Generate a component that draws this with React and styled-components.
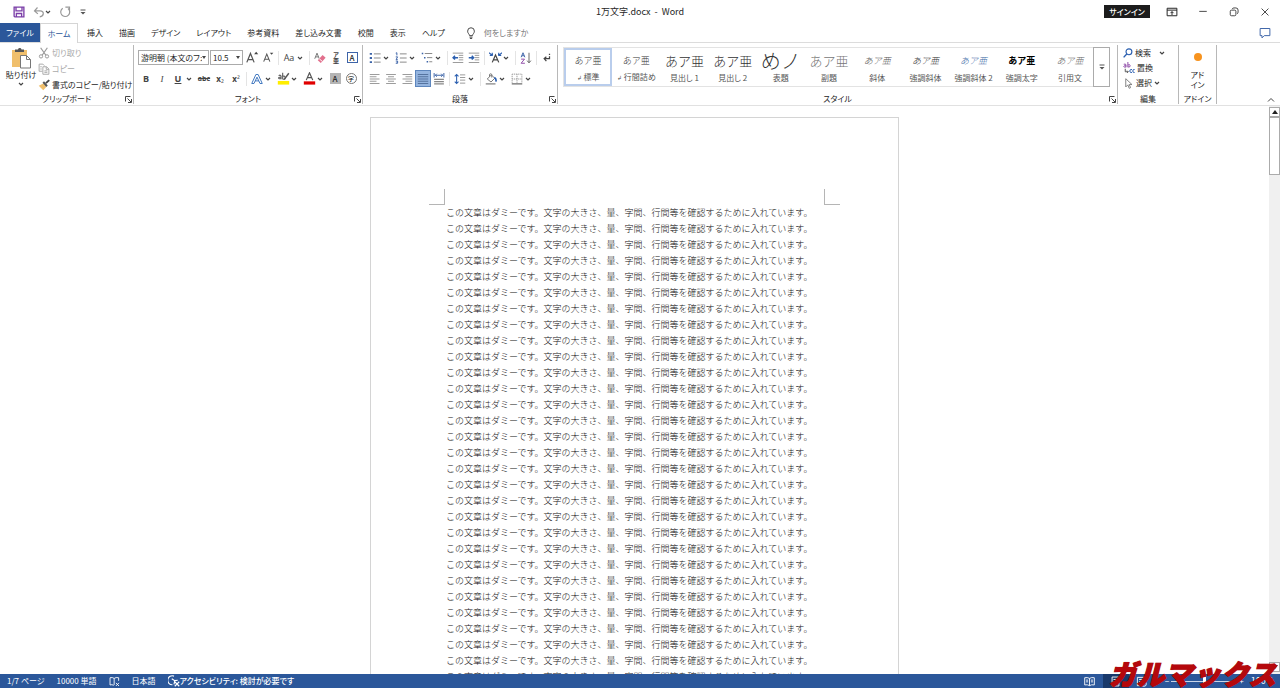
import React from 'react'
import styled, { createGlobalStyle, css } from 'styled-components'

const LINE = 'この文章はダミーです。文字の大きさ、量、字間、行間等を確認するために入れています。'
const LINE_COUNT = 30

const TABS = ['挿入', '描画', 'デザイン', 'レイアウト', '参考資料', '差し込み文書', '校閲', '表示', 'ヘルプ']

const STYLES = [
  { name: '標準', mark: true, selected: true },
  { name: '行間詰め', mark: true },
  { name: '見出し 1', size: 13 },
  { name: '見出し 2', size: 13 },
  { name: '表題', size: 20, sample: 'めノ' },
  { name: '副題', size: 13, color: '#777' },
  { name: '斜体', italic: true, color: '#555' },
  { name: '強調斜体', italic: true },
  { name: '強調斜体 2', italic: true, color: '#3f6da8' },
  { name: '強調太字', bold: true, color: '#000' },
  { name: '引用文', italic: true, color: '#666' },
]

/* ---------- icons ---------- */

const Icon = ({ size = 12, children }) => (
  <svg width={size} height={size} viewBox="0 0 16 16" fill="none" stroke="#555" strokeWidth="1.3" aria-hidden="true">
    {children}
  </svg>
)

const Chevron = () => (
  <svg width="6" height="6" viewBox="0 0 6 6" fill="none" stroke="#444" strokeWidth="1.2" aria-hidden="true">
    <path d="M1 2l2 2 2-2" />
  </svg>
)

const Triangle = () => (
  <svg width="4" height="3" viewBox="0 0 4 3" aria-hidden="true">
    <path d="M0 0h4L2 3z" fill="#444" />
  </svg>
)

const SaveIcon = () => (
  <Icon>
    <path d="M1.5 1.5h13v13h-12l-1-1zM4 1.5v5h8v-5M4.5 14.5V10h7v4.5" stroke="#7b3fa8" strokeWidth="1.8" />
  </Icon>
)

const UndoIcon = () => (
  <Icon>
    <path d="M6 2L2 6.5l4.5 4M2.5 6.5h7c6 0 5.500 7-.5 8" stroke="#999" strokeWidth="1.6" />
  </Icon>
)

const RedoIcon = () => (
  <Icon>
    <path d="M5 3a6 6 0 1 0 7 .3M8.500 1.5H14v5" stroke="#999" strokeWidth="1.6" />
  </Icon>
)

const CustomizeIcon = () => (
  <Icon size={8}>
    <path d="M3 4h10" strokeWidth="2" />
    <path d="M3 8h10l-5 5z" fill="#555" stroke="none" />
  </Icon>
)

const RibbonModeIcon = () => (
  <Icon>
    <path d="M1.5 3h13v10h-13zM1.5 5.5h13M8 12V7.5M6 9.5l2-2 2 2" stroke="#222" />
  </Icon>
)

const MinimizeIcon = () => (
  <Icon size={10}>
    <path d="M2 7h12" stroke="#222" />
  </Icon>
)

const RestoreIcon = () => (
  <Icon size={10}>
    <rect x="2" y="5" width="9" height="9" rx="2" stroke="#222" />
    <path d="M5 3q1-1.500 3-1.500h3q3.500 0 3.500 3.500v3q0 2-1.500 3" stroke="#222" />
  </Icon>
)

const CloseIcon = () => (
  <Icon size={10}>
    <path d="M2.5 2.5l11 11M13.5 2.5l-11 11" stroke="#222" />
  </Icon>
)

const CommentIcon = () => (
  <Icon>
    <path d="M1.5 2h13v9.5H7l-3 3v-3H1.5z" stroke="#3d64a8" />
  </Icon>
)

const BulbIcon = () => (
  <Icon>
    <path d="M6 11.5c0-2-2.5-3-2.5-6a4.5 4.5 0 0 1 9 0c0 3-2.5 4-2.5 6zM6 13.500h4M6.500 15.300h3" stroke="#444" />
  </Icon>
)

const PasteIcon = () => (
  <svg width="20" height="22" viewBox="0 0 20 22" fill="none" aria-hidden="true">
    <path d="M1 3h15v17H1z" fill="#f0bf6c" />
    <path d="M4 5V2.5h3a1.8 1.8 0 0 1 3.5 0H13V5z" fill="#555" />
    <path d="M9.5 8.500h6l4 4V21h-10z" fill="#fff" stroke="#777" />
    <path d="M15.500 8.500v4h4" stroke="#777" />
  </svg>
)

const CutIcon = () => (
  <Icon>
    <path d="M3.5 1l7 10M12.5 1l-7 10" stroke="#999" strokeWidth="1.6" />
    <circle cx="4" cy="12.5" r="2.2" stroke="#999" />
    <circle cx="12" cy="12.5" r="2.2" stroke="#999" />
  </Icon>
)

const CopyIcon = () => (
  <Icon>
    <path d="M6 11H1.5V1.5h5l2 2M6.500 5h5l3 3v7h-8zM11 5v3.500h3.500M3 5h2M3 8h2M8.500 10.500h4M8.500 12.500h4" stroke="#aaa" />
  </Icon>
)

const PainterIcon = () => (
  <Icon>
    <path d="M1 9l6-3 4 4.5L7 15z" fill="#f0bf6c" stroke="none" />
    <path d="M6 5l5 5.500 2-2L8 3z" fill="#555" stroke="none" />
    <path d="M10.500 5.500L15 1.500" stroke="#444" strokeWidth="2.6" />
  </Icon>
)

const EraserIcon = () => (
  <Icon>
    <path d="M1 9L4 1.500 7 9M2 6.500h4" stroke="#777" />
    <path d="M5 11l6.500-7 4 3.500L9 14.500z" fill="#e2708d" stroke="none" />
    <path d="M7 9l4 3.500" stroke="#fff" />
  </Icon>
)

const ListIcon = ({ kind }) => (
  <Icon>
    {kind === 'number' ? (
      <path d="M1 1.5l1.5-.5v3.500M1 6.500h2.500L1.500 10h2M1 12h2.500v3H1M2 13.500h1" stroke="#3d64a8" />
    ) : kind === 'level' ? (
      <path d="M1 2h2M4 7.500h2M7.500 13h2" stroke="#3d64a8" strokeWidth="2" />
    ) : (
      <path d="M1 2.500h3M1 8h3M1 13.500h3" stroke="#3d64a8" strokeWidth="2.6" />
    )}
    {kind === 'level' ? (
      <path d="M5 2h10M8 7.500h7M11 13h4" stroke="#888" />
    ) : (
      <path d="M6.500 2.500h9M6.500 8h9M6.500 13.500h9" stroke="#888" />
    )}
  </Icon>
)

const IndentIcon = ({ out }) => (
  <Icon>
    <path d="M1 1.500h14M9 4.500h6M9 7.500h6M9 10.500h6M1 14h14" stroke="#999" />
    <path d={out ? 'M8 7.500H1.500M4 5L1.500 7.500 4 10' : 'M1 7.500h6.500M5 5l2.500 2.500L5 10'} stroke="#2b5fb0" strokeWidth="2" />
  </Icon>
)

const TextWidthIcon = () => (
  <Icon size={13}>
    <path d="M4 14L8 5l4 9M5.500 11h5" stroke="#444" strokeWidth="1.5" />
    <path d="M0 2l4 3.500M4 2v3.500H1M16 2l-4 3.500M12 2v3.500h3" stroke="#2b5fb0" strokeWidth="1.4" />
  </Icon>
)

const SortIcon = () => (
  <Icon>
    <path d="M1.500 7L4 1l2.500 6M2.500 5h3" stroke="#3d64a8" />
    <path d="M1.500 9.500H6L1.500 15h5" stroke="#8e4aa8" />
    <path d="M12 1v13M9.500 11.500l2.500 3 2.500-3" stroke="#666" />
  </Icon>
)

const MarkIcon = () => (
  <Icon size={10}>
    <path d="M12 1v2M12 5v4H4M7 6L3.500 9 7 13" stroke="#444" strokeWidth="2" />
  </Icon>
)

const ALIGN = {
  left: 'M1 2h13M1 5h9M1 8h13M1 11h9M1 14h13',
  center: 'M1.5 2h13M4 5h8M1.5 8h13M4 11h8M1.5 14h13',
  right: 'M2 2h13M6 5h9M2 8h13M6 11h9M2 14h13',
  justify: 'M1 2h14M1 5h14M1 8h14M1 11h14M1 14h14',
}

const AlignIcon = ({ kind }) => (
  <Icon>
    <path d={ALIGN[kind]} stroke={kind === 'justify' ? '#55739f' : '#999'} strokeWidth={kind === 'justify' ? 1.6 : 1.3} />
  </Icon>
)

const DistributeIcon = () => (
  <Icon>
    <path d="M1.5 0v6M14.500 0v6M3 3h10M5 1L3 3l2 2M11 1l2 2-2 2" stroke="#3d64a8" />
    <path d="M1.5 8.500h13M1.500 11.500h13M1.500 14.500h13" stroke="#888" strokeWidth="1.8" />
  </Icon>
)

const SpacingIcon = () => (
  <Icon>
    <path d="M3.500 2v12M1 4.500L3.500 2 6 4.500M1 11.500L3.500 14 6 11.500" stroke="#2b5fb0" strokeWidth="1.4" />
    <path d="M8 2.500h7M8 6h7M8 9.500h7M8 13.500h7" stroke="#999" />
  </Icon>
)

const BucketIcon = () => (
  <Icon>
    <path d="M3 8l5.500-5.500L13 7l-5 5zM6 5V2.500a1.500 1.500 0 0 1 3 0V6" stroke="#777" />
    <path d="M12.500 6q3 2 2 5.500" stroke="#2b5fb0" strokeWidth="2.2" />
    <path d="M1 14.500h13" stroke="#999" strokeWidth="2" />
  </Icon>
)

const BorderIcon = () => (
  <Icon>
    <path d="M1.500 1.500h13v12M1.500 1.500v12M8 1.500v12M1.500 8h13" stroke="#999" strokeDasharray="1.5 1" />
    <path d="M1 14.500h14" stroke="#666" strokeWidth="1.6" />
  </Icon>
)

const HighlightIcon = () => (
  <Icon size={13}>
    <path d="M1 11h14v4.500H1z" fill="#ffee00" stroke="none" />
    <path d="M2 4.500q2.500-1.500 3 .5v4M5 6.500q-3-.5-3 1t3 .5M7 1v8M7 5.500q3-1.500 3 1.500t-3 1.500" stroke="#555" />
    <path d="M14.500 1.500L9 9" stroke="#555" strokeWidth="1.8" />
  </Icon>
)

const FontColorIcon = () => (
  <Icon size={13}>
    <path d="M4 10l4-9 4 9M5.500 7h5" stroke="#555" strokeWidth="1.5" />
    <path d="M1 11.500h14v4H1z" fill="#e00000" stroke="none" />
  </Icon>
)

const EffectIcon = () => (
  <Icon>
    <path d="M1 14L6.500 2h3L15 14h-3L8 5.500 4 14zM5.500 10.500h5" stroke="#3f76bf" />
  </Icon>
)

const SizeIcon = ({ down }) => (
  <Icon size={down ? 11 : 13}>
    <path d="M1 14L5.500 3 10 14M2.500 10.500h6" stroke="#555" strokeWidth="1.5" />
    <path d={down ? 'M10 1h5l-2.500 3z' : 'M10 4h5l-2.500-3z'} fill="#444" stroke="none" />
  </Icon>
)

const LauncherIcon = () => (
  <svg width="7" height="7" viewBox="0 0 7 7" fill="none" stroke="#444" aria-hidden="true">
    <path d="M.5 5.5v-5h5M2.5 2.5L6 6M6.5 3v3.500H3" />
  </svg>
)

const SearchIcon = () => (
  <Icon size={10}>
    <circle cx="9.500" cy="6" r="4.700" stroke="#2b5fb0" strokeWidth="1.8" />
    <path d="M6 9.500L1 15" stroke="#2b5fb0" strokeWidth="2.2" />
  </Icon>
)

const ReplaceIcon = () => (
  <Icon>
    <path d="M1 3q3-1 3 1v3M4 5q-3-.5-3 1t3 .5M6.500 0v7M6.500 4q3-1.500 3 1t-3 1.500" stroke="#8e4aa8" />
    <path d="M3 9v4h4M5.500 11.500L7 13l-1.500 1.500" stroke="#555" />
    <path d="M12 10q-3-.5-3 2t3 2M15.500 10q-2.500-.5-2.500 2t2.500 2" stroke="#2b5fb0" />
  </Icon>
)

const CursorIcon = () => (
  <Icon size={11}>
    <path d="M4 1v12l3-3 2 5 2-1-2-4.500h4z" stroke="#777" />
  </Icon>
)

const ProofIcon = () => (
  <Icon size={11}>
    <path d="M7 13.500Q4 12 1.500 13V2.500Q5 1.500 7.500 3.500 10 1.500 14 2.500V7M7.500 3.500V13M10 10l4.500 4.500M14.500 10L10 14.500" stroke="#fff" />
  </Icon>
)

const AccessIcon = () => (
  <Icon>
    <path d="M8 1.500a6 6 0 1 0-2 11.500" stroke="#fff" strokeWidth="1.5" />
    <path d="M5 5l4 2.500 4-.5M9 7.500l-1 5M9 9l6 6M15 9l-6 6" stroke="#fff" strokeWidth="1.5" />
  </Icon>
)

const BookIcon = () => (
  <Icon size={11}>
    <path d="M1 2.500q4-1 7 1 3-2 7-1v10.500q-4-1-7 1-3-2-7-1zM8 3.500V14M3 6h3M3 8.500h3M10 6h3M10 8.500h3" stroke="#fff" />
  </Icon>
)

const PrintViewIcon = () => (
  <Icon size={11}>
    <path d="M3 1.500h10v13H3zM5 5h6M5 8h6M5 11h6" stroke="#fff" />
  </Icon>
)

const WebViewIcon = () => (
  <Icon size={11}>
    <path d="M2 2h12v6M2 2v12h6M4.500 5h7M4.500 8h4" stroke="#fff" />
    <circle cx="11.500" cy="11.500" r="3.500" stroke="#fff" />
  </Icon>
)

/* ---------- page ---------- */

const App = () => (
  <>
    <GlobalStyle />
    <Window>
      <TitleBar>
        <QuickAccess>
          <BarButton aria-label="上書き保存"><SaveIcon /></BarButton>
          <BarButton aria-label="元に戻す"><UndoIcon /><Chevron /></BarButton>
          <BarButton aria-label="やり直し"><RedoIcon /></BarButton>
          <BarButton aria-label="カスタマイズ"><CustomizeIcon /></BarButton>
        </QuickAccess>
        <Title>1万文字.docx&nbsp; -&nbsp; Word</Title>
        <WindowControls>
          <SignIn>サインイン</SignIn>
          <WindowButton aria-label="リボンの表示オプション"><RibbonModeIcon /></WindowButton>
          <WindowButton aria-label="最小化"><MinimizeIcon /></WindowButton>
          <WindowButton aria-label="元のサイズ"><RestoreIcon /></WindowButton>
          <WindowButton aria-label="閉じる"><CloseIcon /></WindowButton>
        </WindowControls>
      </TitleBar>

      <TabBar>
        <FileTab>ファイル</FileTab>
        <Tab $active>ホーム</Tab>
        {TABS.map((tab) => <Tab key={tab}>{tab}</Tab>)}
        <TellMe><BulbIcon /><span>何をしますか</span></TellMe>
        <CommentButton aria-label="コメント"><CommentIcon /></CommentButton>
      </TabBar>

      <Ribbon>
        <Group $width={134}>
          <ClipboardBody>
            <PasteButton><PasteIcon />貼り付け<Chevron /></PasteButton>
            <Stack>
              <TextButton $muted><CutIcon />切り取り</TextButton>
              <TextButton $muted><CopyIcon />コピー</TextButton>
              <TextButton><PainterIcon />書式のコピー/貼り付け</TextButton>
            </Stack>
          </ClipboardBody>
          <GroupLabel label="クリップボード" />
        </Group>

        <Group $width={229}>
          <Tools>
            <ToolRow>
              <Combo $width={71}>
                <select aria-label="フォント"><option>游明朝 (本文のフォント)</option></select>
                <Triangle />
              </Combo>
              <Combo $width={33}>
                <select aria-label="フォント サイズ"><option>10.5</option></select>
                <Triangle />
              </Combo>
              <Tool aria-label="フォントの拡大"><SizeIcon /></Tool>
              <Tool aria-label="フォントの縮小"><SizeIcon down /></Tool>
              <Separator />
              <DropTool label="文字種の変換"><Letter>Aa</Letter></DropTool>
              <Separator />
              <Tool aria-label="書式のクリア"><EraserIcon /></Tool>
              <Tool aria-label="ルビ"><Ruby><span>ア</span><span>亜</span></Ruby></Tool>
              <Tool aria-label="囲み線"><Boxed>A</Boxed></Tool>
            </ToolRow>
            <ToolRow>
              <Tool aria-label="太字"><Letter $bold>B</Letter></Tool>
              <Tool aria-label="斜体"><Letter $italic $serif>I</Letter></Tool>
              <DropTool label="下線"><Letter $bold $line="underline">U</Letter></DropTool>
              <Tool aria-label="取り消し線"><Letter $size={7} $bold $line="line-through">abc</Letter></Tool>
              <Tool aria-label="下付き"><Letter $size={8} $bold>x<sub>₂</sub></Letter></Tool>
              <Tool aria-label="上付き"><Letter $size={8} $bold>x<sup>²</sup></Letter></Tool>
              <Separator />
              <DropTool label="文字の効果"><EffectIcon /></DropTool>
              <DropTool label="蛍光ペン"><HighlightIcon /></DropTool>
              <DropTool label="フォントの色"><FontColorIcon /></DropTool>
              <Tool aria-label="文字の網かけ"><Boxed $shaded>A</Boxed></Tool>
              <Tool aria-label="囲い文字"><Boxed $round>字</Boxed></Tool>
            </ToolRow>
          </Tools>
          <GroupLabel label="フォント" />
        </Group>

        <Group $width={195}>
          <Tools>
            <ToolRow>
              <DropTool label="箇条書き"><ListIcon /></DropTool>
              <DropTool label="段落番号"><ListIcon kind="number" /></DropTool>
              <DropTool label="アウトライン"><ListIcon kind="level" /></DropTool>
              <Separator />
              <Tool aria-label="インデントを減らす"><IndentIcon out /></Tool>
              <Tool aria-label="インデントを増やす"><IndentIcon /></Tool>
              <Separator />
              <DropTool label="拡張書式"><TextWidthIcon /></DropTool>
              <Separator />
              <Tool aria-label="並べ替え"><SortIcon /></Tool>
              <Separator />
              <Tool aria-label="編集記号"><MarkIcon /></Tool>
            </ToolRow>
            <ToolRow>
              <Tool aria-label="左揃え"><AlignIcon kind="left" /></Tool>
              <Tool aria-label="中央揃え"><AlignIcon kind="center" /></Tool>
              <Tool aria-label="右揃え"><AlignIcon kind="right" /></Tool>
              <Tool aria-label="両端揃え" $on><AlignIcon kind="justify" /></Tool>
              <Tool aria-label="均等割り付け"><DistributeIcon /></Tool>
              <Separator />
              <DropTool label="行間"><SpacingIcon /></DropTool>
              <Separator />
              <DropTool label="塗りつぶし"><BucketIcon /></DropTool>
              <DropTool label="罫線"><BorderIcon /></DropTool>
            </ToolRow>
          </Tools>
          <GroupLabel label="段落" />
        </Group>

        <Group $width={560}>
          <Gallery>
            {STYLES.map((s) => (
              <StyleCard key={s.name} $selected={s.selected}>
                <Sample $size={s.size} $color={s.color} $italic={s.italic} $bold={s.bold}>
                  {s.sample || 'あア亜'}
                </Sample>
                <StyleName>{s.mark && <small>↲</small>}{s.name}</StyleName>
              </StyleCard>
            ))}
            <MoreButton aria-label="その他"><CustomizeIcon /></MoreButton>
          </Gallery>
          <GroupLabel label="スタイル" />
        </Group>

        <Group $width={61}>
          <Stack $edit>
            <TextButton><SearchIcon />検索<Gap /><Chevron /></TextButton>
            <TextButton><ReplaceIcon />置換</TextButton>
            <TextButton><CursorIcon />選択<Chevron /></TextButton>
          </Stack>
          <GroupLabel label="編集" plain />
        </Group>

        <Group $width={38}>
          <AddIn><Dot />アド<br />イン</AddIn>
          <GroupLabel label="アドイン" plain />
        </Group>
        <Collapse aria-label="リボンを折りたたむ">
          <svg width="8" height="6" viewBox="0 0 8 6" fill="none" stroke="#444"><path d="M1 4.5l3-3 3 3" /></svg>
        </Collapse>
      </Ribbon>

      <Workspace>
        <Canvas>
          <Paper>
            <Margins><Corner /><Corner $right /></Margins>
            <Body>
              {Array.from({ length: LINE_COUNT }, (_, i) => <p key={i}>{LINE}</p>)}
            </Body>
          </Paper>
        </Canvas>
        <Scrollbar>
          <ScrollButton aria-label="上へ"><svg width="6" height="4" viewBox="0 0 6 4"><path d="M0 4l3-4 3 4z" fill="#222" /></svg></ScrollButton>
          <Thumb />
          <ScrollButton aria-label="下へ" $end><svg width="6" height="4" viewBox="0 0 6 4"><path d="M0 0l3 4 3-4z" fill="#222" /></svg></ScrollButton>
        </Scrollbar>
      </Workspace>

      <StatusBar>
        <StatusItem>1/7 ページ</StatusItem>
        <StatusItem>10000 単語</StatusItem>
        <StatusItem><ProofIcon /></StatusItem>
        <StatusItem>日本語</StatusItem>
        <StatusItem $bold><AccessIcon />アクセシビリティ: 検討が必要です</StatusItem>
        <ViewControls>
          <ViewButton aria-label="閲覧モード"><BookIcon /></ViewButton>
          <ViewButton aria-label="印刷レイアウト" $on><PrintViewIcon /></ViewButton>
          <ViewButton aria-label="Web レイアウト"><WebViewIcon /></ViewButton>
          <Zoom>
            −<input type="range" min="10" max="190" defaultValue="100" aria-label="ズーム" />+
          </Zoom>
          <ZoomValue>100%</ZoomValue>
        </ViewControls>
      </StatusBar>
      <Watermark>ガルマックス</Watermark>
    </Window>
  </>
)

const DropTool = ({ label, children }) => (
  <Tool aria-label={label} $drop>
    <ToolFace>{children}</ToolFace>
    <Chevron />
  </Tool>
)

const GroupLabel = ({ label, plain }) => (
  <LabelRow>
    <span>{label}</span>
    {!plain && <Launcher aria-label={`${label}の設定`}><LauncherIcon /></Launcher>}
  </LabelRow>
)

export default App

const GlobalStyle = createGlobalStyle`
  * {
    box-sizing: border-box;
  }

  body {
    margin: 0;
    background: #fff;
    color: #262626;
    font-family: "Noto Sans CJK JP", "Noto Sans", sans-serif;
    font-size: 8px;
    line-height: 12px;
    font-feature-settings: "palt";
  }

  button, select {
    margin: 0;
    padding: 0;
    border: 0;
    background: none;
    color: inherit;
    font: inherit;
  }

  svg {
    flex: none;
    display: block;
  }
`

const Window = styled.div`
  position: relative;
  display: flex;
  flex-direction: column;
  height: 100vh;
  overflow: hidden;
`

const TitleBar = styled.header`
  display: grid;
  grid-template-columns: 1fr auto 1fr;
  align-items: center;
  height: 23px;
`

const QuickAccess = styled.div`
  display: flex;
  align-items: center;
  gap: 8px;
  padding-left: 13px;
`

const BarButton = styled.button`
  display: flex;
  align-items: center;
  min-width: 12px;
`

const Title = styled.h1`
  margin: 0;
  font-size: 9px;
  font-weight: 400;
`

const WindowControls = styled.div`
  display: flex;
  align-items: center;
  justify-content: flex-end;
`

const SignIn = styled.button`
  width: 46px;
  height: 13px;
  margin-right: 6px;
  background: #1c1c1c;
  color: #fff;
  font-weight: 500;
`

const WindowButton = styled.button`
  display: flex;
  align-items: center;
  justify-content: center;
  width: 31px;
  height: 20px;
`

const TabBar = styled.nav`
  display: flex;
  align-items: stretch;
  height: 20px;
  border-bottom: 1px solid #dcdcdc;
`

const FileTab = styled.button`
  width: 40px;
  background: #2b579a;
  color: #fff;
`

const Tab = styled.button`
  padding: 0 8px;
  white-space: nowrap;

  ${({ $active }) => $active && css`
    width: 38px;
    padding: 0;
    margin: 0 1px -1px 0;
    border: 1px solid #d5d5d5;
    border-bottom: 0;
    background: #fff;
    color: #2b579a;
  `}
`

const TellMe = styled.button`
  display: flex;
  align-items: center;
  gap: 7px;
  padding: 0 12px;
  color: #777;
  white-space: nowrap;
`

const CommentButton = styled.button`
  display: flex;
  align-items: center;
  margin-left: auto;
  padding: 0 9px;
`

const Ribbon = styled.div`
  display: flex;
  height: 63px;
  border-bottom: 1px solid #e1e1e1;
`

const Group = styled.section`
  display: flex;
  flex-direction: column;
  justify-content: space-between;
  flex: 0 0 ${({ $width }) => $width}px;
  margin: 2px 0 1px;
  border-right: 1px solid #b8b8b8;
`

const LabelRow = styled.div`
  position: relative;
  display: flex;
  justify-content: center;
  height: 11px;
  white-space: nowrap;
`

const Launcher = styled.button`
  position: absolute;
  right: 1px;
  bottom: 1px;
`

const ClipboardBody = styled.div`
  display: flex;
  padding-left: 5px;
`

const PasteButton = styled.button`
  display: flex;
  flex-direction: column;
  align-items: center;
  width: 32px;
  padding-top: 2px;
  white-space: nowrap;
`

const Stack = styled.div`
  display: flex;
  flex-direction: column;
  gap: ${({ $edit }) => ($edit ? 3 : 4)}px;
  padding: ${({ $edit }) => ($edit ? '2px 0 0 5px' : '2px 0 0 1px')};
`

const TextButton = styled.button`
  display: flex;
  align-items: center;
  gap: 2px;
  height: 12px;
  color: ${({ $muted }) => ($muted ? '#aaa' : '#262626')};
  white-space: nowrap;
`

const Gap = styled.span`
  width: 4px;
`

const Tools = styled.div`
  display: flex;
  flex-direction: column;
  gap: 4px;
  padding: 4px 0 0 4px;
`

const ToolRow = styled.div`
  display: flex;
  align-items: center;
  height: 17px;
`

const Tool = styled.button`
  display: flex;
  align-items: center;
  justify-content: ${({ $drop }) => ($drop ? 'flex-start' : 'center')};
  flex: none;
  width: ${({ $drop }) => ($drop ? 26 : 16)}px;
  height: 17px;
  ${({ $on }) => $on && css`
    border: 1px solid #5d86bd;
    background: #94b4df;
  `}
`

const ToolFace = styled.span`
  display: flex;
  justify-content: center;
  width: 16px;
`

const Separator = styled.span`
  width: 1px;
  height: 14px;
  margin: 0 2px;
  background: #e4e4e4;
`

const Combo = styled.span`
  display: flex;
  align-items: center;
  width: ${({ $width }) => $width}px;
  height: 15px;
  margin-right: 1px;
  padding: 0 2px;
  border: 1px solid #ababab;

  select {
    flex: 1;
    min-width: 0;
    height: 13px;
    overflow: hidden;
    appearance: none;
  }
`

const Letter = styled.span`
  color: #444;
  font-family: ${({ $serif }) => ($serif ? '"Liberation Serif", serif' : '"Open Sans", "Noto Sans", sans-serif')};
  font-size: ${({ $size = 9 }) => $size}px;
  font-weight: ${({ $bold }) => ($bold ? 700 : 400)};
  font-style: ${({ $italic }) => ($italic ? 'italic' : 'normal')};
  text-decoration: ${({ $line = 'none' }) => $line};

  sub, sup {
    font-size: 8px;
    font-weight: 400;
    line-height: 1;
    vertical-align: baseline;
  }
`

const Ruby = styled.span`
  display: flex;
  flex-direction: column;
  align-items: center;
  color: #444;
  font-size: 6px;
  font-weight: 700;
  line-height: 6px;
`

const Boxed = styled.span`
  display: flex;
  align-items: center;
  justify-content: center;
  width: 11px;
  height: 11px;
  border: 1px solid ${({ $shaded, $round }) => ($shaded ? '#b5b5b5' : $round ? '#777' : '#3d64a8')};
  border-radius: ${({ $round }) => ($round ? '50%' : 0)};
  background: ${({ $shaded }) => ($shaded ? '#b5b5b5' : 'none')};
  font-size: ${({ $round }) => ($round ? 6 : 8)}px;
  font-weight: 500;
`

const Gallery = styled.div`
  display: flex;
  height: 40px;
  margin: 2px 7px 0 5px;
  border: 1px solid #e3e3e3;
`

const StyleCard = styled.button`
  display: flex;
  flex-direction: column;
  align-items: center;
  flex: 1;
  min-width: 0;
  border: 2px solid ${({ $selected }) => ($selected ? '#b9cdec' : 'transparent')};
  white-space: nowrap;
`

const Sample = styled.span`
  display: flex;
  align-items: center;
  height: 22px;
  color: ${({ $color = '#333' }) => $color};
  font-size: ${({ $size = 9 }) => $size}px;
  font-weight: ${({ $bold }) => ($bold ? 700 : 300)};
  font-style: ${({ $italic }) => ($italic ? 'italic' : 'normal')};
  font-feature-settings: normal;
`

const StyleName = styled.span`
  color: #555;

  small {
    margin-right: 2px;
    font-size: 6px;
  }
`

const MoreButton = styled.button`
  display: flex;
  align-items: center;
  justify-content: center;
  width: 17px;
  margin: -1px;
  border: 1px solid #ababab;
`

const AddIn = styled.button`
  padding-top: 8px;
  line-height: 10px;
`

const Dot = styled.span`
  display: block;
  width: 8px;
  height: 8px;
  margin: 0 auto 9px;
  border-radius: 50%;
  background: #f7931e;
`

const Collapse = styled.button`
  align-self: flex-end;
  margin-left: auto;
  padding: 0 5px 2px;
`

const Workspace = styled.main`
  display: flex;
  flex: 1;
  min-height: 0;
`

const Canvas = styled.div`
  display: flex;
  justify-content: center;
  flex: 1;
  padding-top: 11px;
  overflow: hidden;
`

const Paper = styled.article`
  width: 529px;
  height: 748px;
  padding-top: 71px;
  border: 1px solid #d4d4d4;
`

const Margins = styled.div`
  display: flex;
  justify-content: space-between;
  padding: 0 58px;
`

const Corner = styled.span`
  width: 16px;
  height: 16px;
  border-bottom: 1px solid #b5b5b5;
  border-left: ${({ $right }) => ($right ? '1px solid #b5b5b5' : 0)};
  border-right: ${({ $right }) => ($right ? 0 : '1px solid #b5b5b5')};
`

const Body = styled.div`
  padding-left: 75px;
  color: #111;
  font-size: 9px;
  font-weight: 300;
  line-height: 16px;
  font-feature-settings: normal;
  white-space: nowrap;

  p {
    margin: 0;
  }
`

const Scrollbar = styled.div`
  display: flex;
  flex-direction: column;
  width: 11px;
  padding-top: 1px;
  background: #f0f0f0;
`

const ScrollButton = styled.button`
  display: flex;
  align-items: center;
  justify-content: center;
  flex: none;
  height: 10px;
  margin: ${({ $end }) => ($end ? 'auto 0 2px' : 0)};
  border: 1px solid #ababab;
  background: #fff;
`

const Thumb = styled.div`
  height: 58px;
  border: 1px solid #ababab;
  background: #fff;
`

const StatusBar = styled.footer`
  display: flex;
  align-items: center;
  gap: 12px;
  flex: none;
  height: 14px;
  padding-left: 7px;
  background: #2b579a;
  color: #fff;
`

const StatusItem = styled.span`
  display: flex;
  align-items: center;
  font-weight: ${({ $bold }) => ($bold ? 500 : 400)};
  white-space: nowrap;
`

const ViewControls = styled.div`
  display: flex;
  align-items: center;
  height: 14px;
  margin-left: auto;
  padding-right: 6px;
`

const ViewButton = styled.button`
  display: flex;
  align-items: center;
  justify-content: center;
  width: 26px;
  height: 14px;
  background: ${({ $on }) => ($on ? '#19396b' : 'none')};
`

const Zoom = styled.label`
  display: flex;
  align-items: center;
  gap: 2px;
  margin: 0 7px 0 10px;

  input {
    width: 66px;
    height: 1px;
    margin: 0;
    appearance: none;
    background: #c8d4e8;
  }

  input::-webkit-slider-thumb {
    width: 3px;
    height: 8px;
    appearance: none;
    background: #fff;
  }
`

const ZoomValue = styled.span`
  font-size: 9px;
`

const Watermark = styled.div`
  position: absolute;
  right: 4px;
  bottom: 1px;
  color: #b5080c;
  font-size: 28px;
  font-style: italic;
  font-weight: 900;
  line-height: 28px;
  font-feature-settings: normal;
  text-shadow: 0 0 1px #5c0004;
  -webkit-text-stroke: 1px #b5080c;
  pointer-events: none;
`
